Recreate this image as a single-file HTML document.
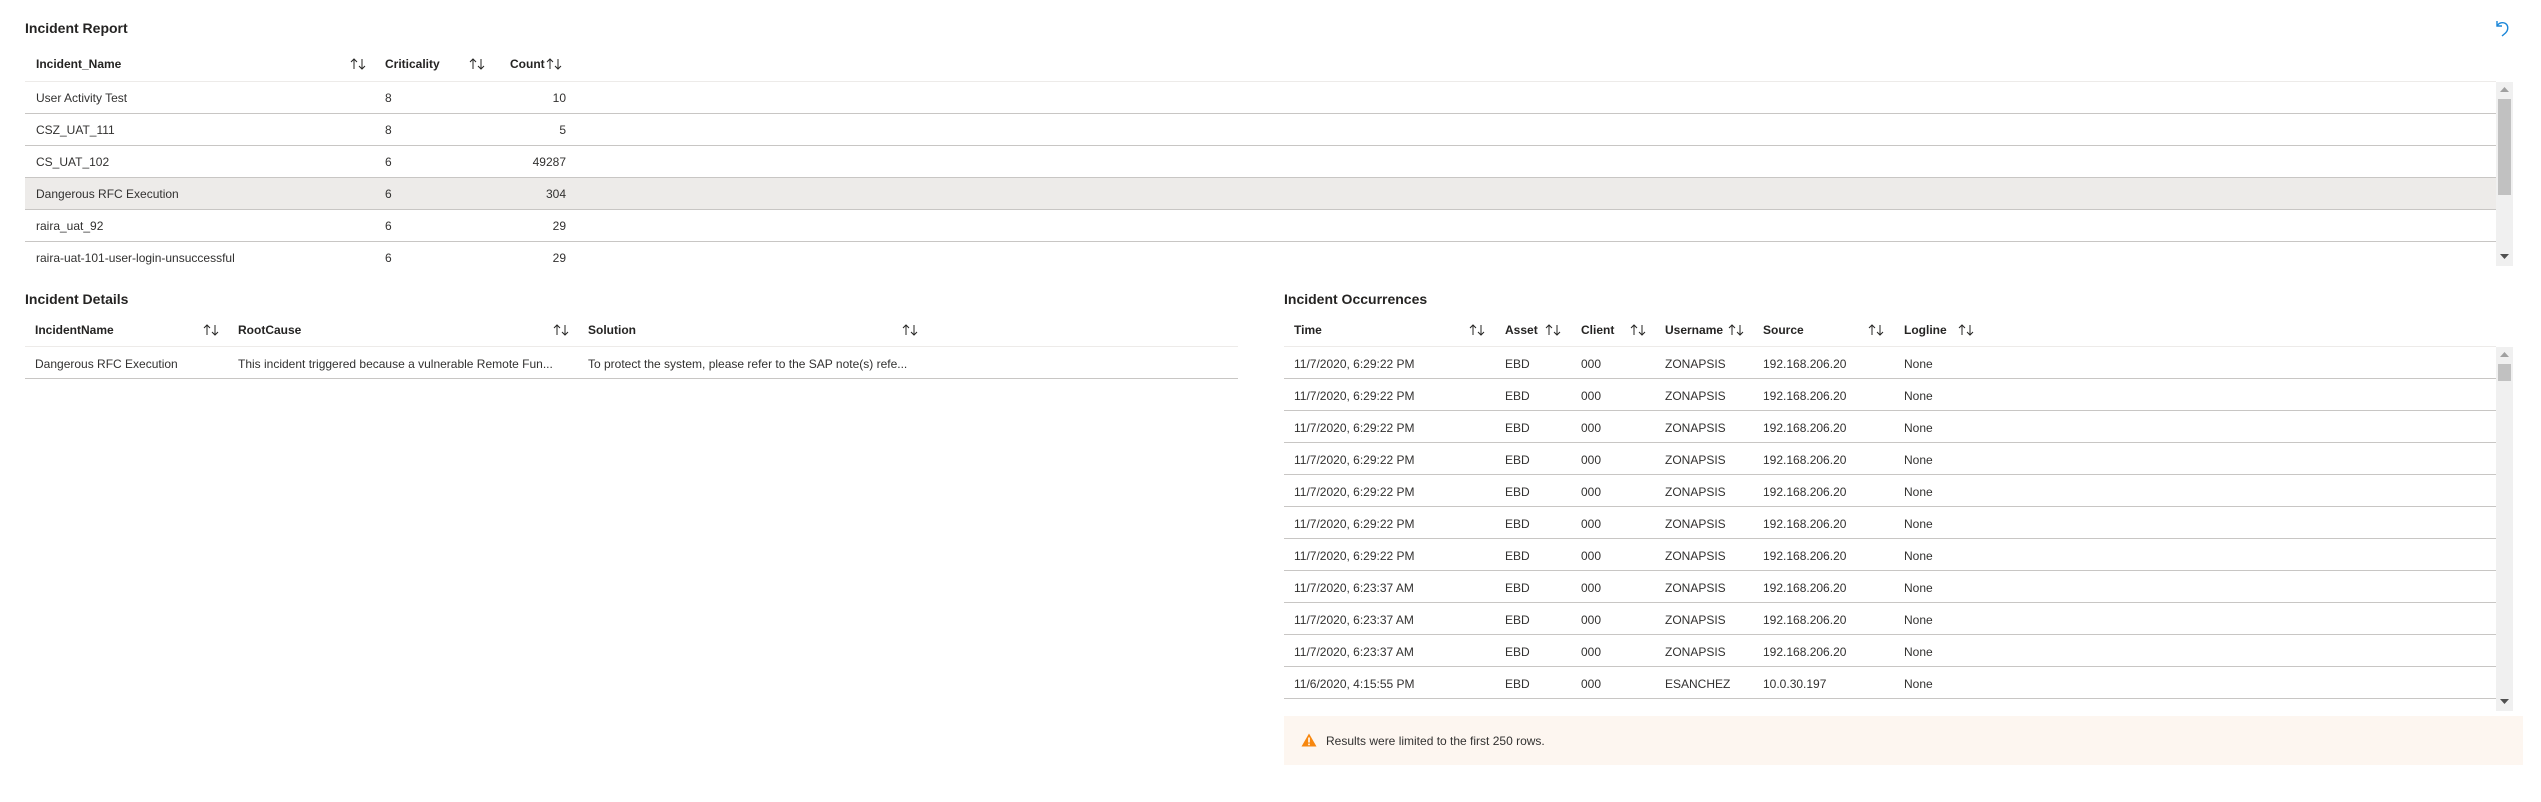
<!DOCTYPE html>
<html><head><meta charset="utf-8"><style>
*{margin:0;padding:0;box-sizing:border-box}
body{width:2541px;height:802px;background:#fff;position:relative;overflow:hidden;font-family:"Liberation Sans",sans-serif;font-size:12px;color:#323130}
.a{position:absolute;white-space:nowrap;line-height:14px}
.t{font-size:14px;font-weight:700;color:#252423;line-height:16px}
.h{font-weight:700;color:#252423}
.ln{position:absolute;height:1px;background:#c8c6c4}
.hl{position:absolute;height:1px;background:#edebe9}
.s{position:absolute;width:17px;height:12px}
.r{text-align:right}
</style></head><body>
<svg width="0" height="0" style="position:absolute"><defs><g id="srt" fill="none" stroke="#252423" stroke-width="1"><path d="M4 11V1M1 4l3-3 3 3"/><path d="M12 1v10M9 8l3 3 3-3"/></g></defs></svg>

<!-- undo icon -->
<svg style="position:absolute;left:2495px;top:19px" width="16" height="18" viewBox="0 0 16 18"><path d="M2 2v5h5" fill="none" stroke="#1a86d8" stroke-width="1.4"/><path d="M2.5 6.5C4 3.5 8 3 10.5 4.5c3 2 3 6.5 0 9.5L7 17" fill="none" stroke="#1a86d8" stroke-width="1.4"/></svg>

<!-- Incident Report -->
<div class="a t" style="left:25px;top:20px">Incident Report</div>
<div class="a h" style="left:36px;top:57px">Incident_Name</div>
<svg class="s" style="left:350px;top:58px"><use href="#srt"/></svg>
<div class="a h" style="left:385px;top:57px">Criticality</div>
<svg class="s" style="left:469px;top:58px"><use href="#srt"/></svg>
<div class="a h" style="left:510px;top:57px">Count</div>
<svg class="s" style="left:546px;top:58px"><use href="#srt"/></svg>
<div class="hl" style="left:25px;top:81px;width:2471px"></div>
<div style="position:absolute;left:25px;top:177px;width:2471px;height:32px;background:#edebe9"></div>
<div class="ln" style="left:25px;top:113px;width:2471px"></div>
<div class="ln" style="left:25px;top:145px;width:2471px"></div>
<div class="ln" style="left:25px;top:177px;width:2471px"></div>
<div class="ln" style="left:25px;top:209px;width:2471px"></div>
<div class="ln" style="left:25px;top:241px;width:2471px"></div>

<div class="a" style="left:36px;top:91px">User Activity Test</div><div class="a" style="left:385px;top:91px">8</div><div class="a r" style="left:466px;width:100px;top:91px">10</div>
<div class="a" style="left:36px;top:123px">CSZ_UAT_111</div><div class="a" style="left:385px;top:123px">8</div><div class="a r" style="left:466px;width:100px;top:123px">5</div>
<div class="a" style="left:36px;top:155px">CS_UAT_102</div><div class="a" style="left:385px;top:155px">6</div><div class="a r" style="left:466px;width:100px;top:155px">49287</div>
<div class="a" style="left:36px;top:187px">Dangerous RFC Execution</div><div class="a" style="left:385px;top:187px">6</div><div class="a r" style="left:466px;width:100px;top:187px">304</div>
<div class="a" style="left:36px;top:219px">raira_uat_92</div><div class="a" style="left:385px;top:219px">6</div><div class="a r" style="left:466px;width:100px;top:219px">29</div>
<div class="a" style="left:36px;top:251px">raira-uat-101-user-login-unsuccessful</div><div class="a" style="left:385px;top:251px">6</div><div class="a r" style="left:466px;width:100px;top:251px">29</div>

<div style="position:absolute;left:2496px;top:82px;width:17px;height:184px;background:#f0f0f0"></div>
<div style="position:absolute;left:2498px;top:99px;width:13px;height:96px;background:#c1c1c1"></div>
<svg style="position:absolute;left:2500px;top:87px" width="9" height="6"><path d="M0 5L4.5 0 9 5z" fill="#a0a0a0"/></svg>
<svg style="position:absolute;left:2500px;top:254px" width="9" height="6"><path d="M0 0L4.5 5 9 0z" fill="#505050"/></svg>

<!-- Incident Details -->
<div class="a t" style="left:25px;top:291px">Incident Details</div>
<div class="a h" style="left:35px;top:323px">IncidentName</div>
<svg class="s" style="left:203px;top:324px"><use href="#srt"/></svg>
<div class="a h" style="left:238px;top:323px">RootCause</div>
<svg class="s" style="left:553px;top:324px"><use href="#srt"/></svg>
<div class="a h" style="left:588px;top:323px">Solution</div>
<svg class="s" style="left:902px;top:324px"><use href="#srt"/></svg>
<div class="hl" style="left:25px;top:346px;width:1213px"></div>
<div class="a" style="left:35px;top:357px">Dangerous RFC Execution</div>
<div class="a" style="left:238px;top:357px">This incident triggered because a vulnerable Remote Fun...</div>
<div class="a" style="left:588px;top:357px">To protect the system, please refer to the SAP note(s) refe...</div>
<div class="ln" style="left:25px;top:378px;width:1213px"></div>

<!-- Incident Occurrences -->
<div class="a t" style="left:1284px;top:291px">Incident Occurrences</div>
<div class="a h" style="left:1294px;top:323px">Time</div>
<svg class="s" style="left:1469px;top:324px"><use href="#srt"/></svg>
<div class="a h" style="left:1505px;top:323px">Asset</div>
<svg class="s" style="left:1545px;top:324px"><use href="#srt"/></svg>
<div class="a h" style="left:1581px;top:323px">Client</div>
<svg class="s" style="left:1630px;top:324px"><use href="#srt"/></svg>
<div class="a h" style="left:1665px;top:323px">Username</div>
<svg class="s" style="left:1728px;top:324px"><use href="#srt"/></svg>
<div class="a h" style="left:1763px;top:323px">Source</div>
<svg class="s" style="left:1868px;top:324px"><use href="#srt"/></svg>
<div class="a h" style="left:1904px;top:323px">Logline</div>
<svg class="s" style="left:1958px;top:324px"><use href="#srt"/></svg>
<div class="hl" style="left:1284px;top:346px;width:1212px"></div>

<div id="occ"></div>
<div class="a" style="left:1294px;top:357px">11/7/2020, 6:29:22 PM</div><div class="a" style="left:1505px;top:357px">EBD</div><div class="a" style="left:1581px;top:357px">000</div><div class="a" style="left:1665px;top:357px">ZONAPSIS</div><div class="a" style="left:1763px;top:357px">192.168.206.20</div><div class="a" style="left:1904px;top:357px">None</div><div class="ln" style="left:1284px;top:378px;width:1212px"></div>
<div class="a" style="left:1294px;top:389px">11/7/2020, 6:29:22 PM</div><div class="a" style="left:1505px;top:389px">EBD</div><div class="a" style="left:1581px;top:389px">000</div><div class="a" style="left:1665px;top:389px">ZONAPSIS</div><div class="a" style="left:1763px;top:389px">192.168.206.20</div><div class="a" style="left:1904px;top:389px">None</div><div class="ln" style="left:1284px;top:410px;width:1212px"></div>
<div class="a" style="left:1294px;top:421px">11/7/2020, 6:29:22 PM</div><div class="a" style="left:1505px;top:421px">EBD</div><div class="a" style="left:1581px;top:421px">000</div><div class="a" style="left:1665px;top:421px">ZONAPSIS</div><div class="a" style="left:1763px;top:421px">192.168.206.20</div><div class="a" style="left:1904px;top:421px">None</div><div class="ln" style="left:1284px;top:442px;width:1212px"></div>
<div class="a" style="left:1294px;top:453px">11/7/2020, 6:29:22 PM</div><div class="a" style="left:1505px;top:453px">EBD</div><div class="a" style="left:1581px;top:453px">000</div><div class="a" style="left:1665px;top:453px">ZONAPSIS</div><div class="a" style="left:1763px;top:453px">192.168.206.20</div><div class="a" style="left:1904px;top:453px">None</div><div class="ln" style="left:1284px;top:474px;width:1212px"></div>
<div class="a" style="left:1294px;top:485px">11/7/2020, 6:29:22 PM</div><div class="a" style="left:1505px;top:485px">EBD</div><div class="a" style="left:1581px;top:485px">000</div><div class="a" style="left:1665px;top:485px">ZONAPSIS</div><div class="a" style="left:1763px;top:485px">192.168.206.20</div><div class="a" style="left:1904px;top:485px">None</div><div class="ln" style="left:1284px;top:506px;width:1212px"></div>
<div class="a" style="left:1294px;top:517px">11/7/2020, 6:29:22 PM</div><div class="a" style="left:1505px;top:517px">EBD</div><div class="a" style="left:1581px;top:517px">000</div><div class="a" style="left:1665px;top:517px">ZONAPSIS</div><div class="a" style="left:1763px;top:517px">192.168.206.20</div><div class="a" style="left:1904px;top:517px">None</div><div class="ln" style="left:1284px;top:538px;width:1212px"></div>
<div class="a" style="left:1294px;top:549px">11/7/2020, 6:29:22 PM</div><div class="a" style="left:1505px;top:549px">EBD</div><div class="a" style="left:1581px;top:549px">000</div><div class="a" style="left:1665px;top:549px">ZONAPSIS</div><div class="a" style="left:1763px;top:549px">192.168.206.20</div><div class="a" style="left:1904px;top:549px">None</div><div class="ln" style="left:1284px;top:570px;width:1212px"></div>
<div class="a" style="left:1294px;top:581px">11/7/2020, 6:23:37 AM</div><div class="a" style="left:1505px;top:581px">EBD</div><div class="a" style="left:1581px;top:581px">000</div><div class="a" style="left:1665px;top:581px">ZONAPSIS</div><div class="a" style="left:1763px;top:581px">192.168.206.20</div><div class="a" style="left:1904px;top:581px">None</div><div class="ln" style="left:1284px;top:602px;width:1212px"></div>
<div class="a" style="left:1294px;top:613px">11/7/2020, 6:23:37 AM</div><div class="a" style="left:1505px;top:613px">EBD</div><div class="a" style="left:1581px;top:613px">000</div><div class="a" style="left:1665px;top:613px">ZONAPSIS</div><div class="a" style="left:1763px;top:613px">192.168.206.20</div><div class="a" style="left:1904px;top:613px">None</div><div class="ln" style="left:1284px;top:634px;width:1212px"></div>
<div class="a" style="left:1294px;top:645px">11/7/2020, 6:23:37 AM</div><div class="a" style="left:1505px;top:645px">EBD</div><div class="a" style="left:1581px;top:645px">000</div><div class="a" style="left:1665px;top:645px">ZONAPSIS</div><div class="a" style="left:1763px;top:645px">192.168.206.20</div><div class="a" style="left:1904px;top:645px">None</div><div class="ln" style="left:1284px;top:666px;width:1212px"></div>
<div class="a" style="left:1294px;top:677px">11/6/2020, 4:15:55 PM</div><div class="a" style="left:1505px;top:677px">EBD</div><div class="a" style="left:1581px;top:677px">000</div><div class="a" style="left:1665px;top:677px">ESANCHEZ</div><div class="a" style="left:1763px;top:677px">10.0.30.197</div><div class="a" style="left:1904px;top:677px">None</div><div class="ln" style="left:1284px;top:698px;width:1212px"></div>

<div style="position:absolute;left:2496px;top:347px;width:17px;height:364px;background:#f0f0f0"></div>
<div style="position:absolute;left:2498px;top:364px;width:13px;height:17px;background:#c1c1c1"></div>
<svg style="position:absolute;left:2500px;top:352px" width="9" height="6"><path d="M0 5L4.5 0 9 5z" fill="#a0a0a0"/></svg>
<svg style="position:absolute;left:2500px;top:699px" width="9" height="6"><path d="M0 0L4.5 5 9 0z" fill="#505050"/></svg>

<!-- warning -->
<div style="position:absolute;left:1284px;top:716px;width:1239px;height:49px;background:#fdf6f0"></div>
<svg style="position:absolute;left:1301px;top:733px" width="16" height="14" viewBox="0 0 16 14"><path d="M8 0.5L15.5 13.5H0.5z" fill="#f7870f"/><rect x="7.2" y="4.5" width="1.6" height="5" fill="#fff"/><rect x="7.2" y="10.6" width="1.6" height="1.6" fill="#fff"/></svg>
<div class="a" style="left:1326px;top:734px;color:#323130">Results were limited to the first 250 rows.</div>
</body></html>
